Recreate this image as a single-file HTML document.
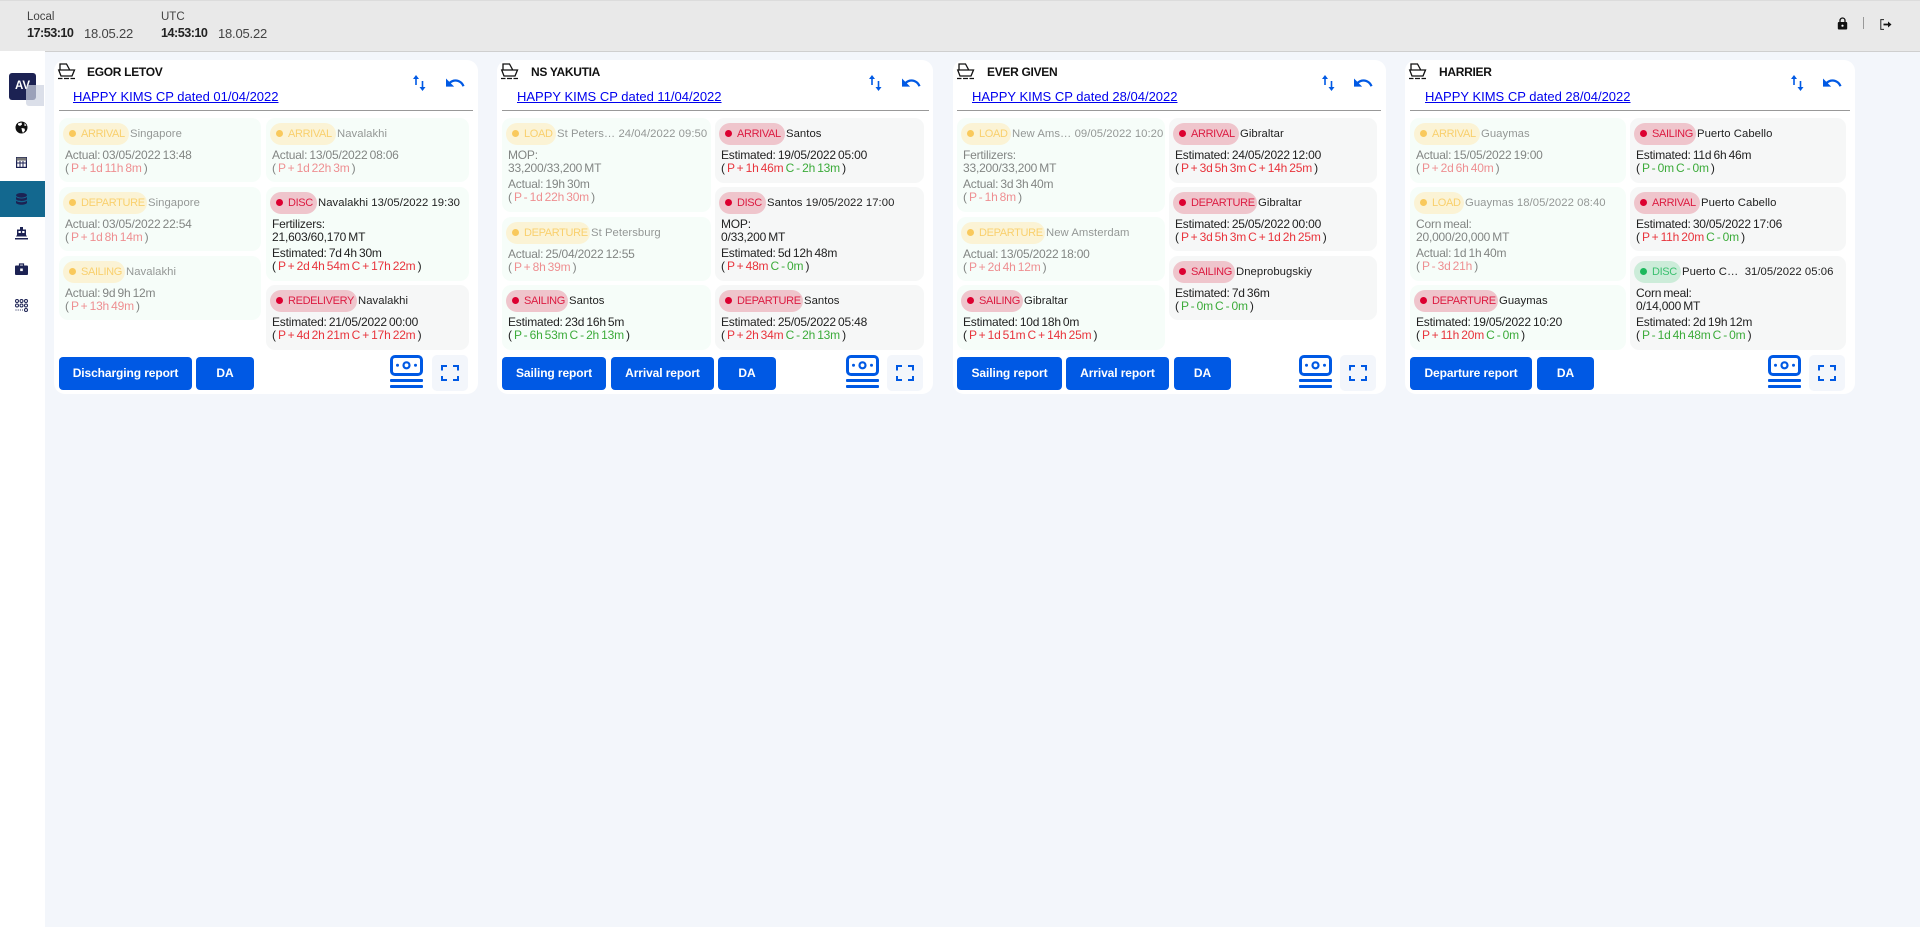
<!DOCTYPE html>
<html lang="en"><head><meta charset="utf-8"><title>Fleet</title>
<style>
html,body{margin:0;padding:0}
body{width:1920px;height:927px;overflow:hidden;background:#f3f6fb;position:relative;font:11.8px/13px "Liberation Sans",sans-serif;color:#222}
.a{position:absolute}
#top{left:0;top:0;width:1920px;height:50px;background:#e9e9e9;border-top:1px solid #dcdcdc;border-bottom:1px solid #cfcfcf}
.tl{font-size:11.5px;color:#444}
.tm{font-size:12.6px;font-weight:bold;letter-spacing:-.5px;color:#222}
.dt{font-size:13px;letter-spacing:-.2px;color:#444}
#side{left:0;top:51px;width:45px;height:876px;background:#fff}
.c{background:#fff;border-radius:11px;top:60px;height:334px}
.t{top:65px;font-size:12px;line-height:14px;font-weight:bold;letter-spacing:-.3px;color:#111;white-space:nowrap}
.l{top:89px;font-size:13px;line-height:16px;color:#00e;text-decoration:underline;white-space:nowrap}
.hr{top:110px;height:1px;background:#999}
.i{border-radius:9px;white-space:nowrap;overflow:hidden;box-sizing:border-box;padding:5px 0 0 4px}
.g{background:#f6fdf9}.k{background:#f6f7f7}
.h{height:22px;line-height:22px;display:flex;font-size:11.3px;letter-spacing:.05px}
.p{display:block;height:22px;border-radius:11px;position:relative;padding-left:18px;box-sizing:border-box;margin-right:1px;font-size:11px;font-weight:normal;letter-spacing:-.35px;flex:none}
.p:before{content:"";position:absolute;left:6px;top:7px;width:7px;height:7px;border-radius:50%}
.y{background:#fbf3d5;color:#f9d06e}.y:before{background:#f9c95c}
.e{background:#efc5cc;color:#dc1c42}.e:before{background:#dc0030}
.n{background:#ccecd9;color:#3cc070}.n:before{background:#1db85c}
.w1{width:66px}.w2{width:84px}.w3{width:62px}.w4{width:47px}.w5{width:87px}.w6{width:50px}
.d{margin:4px 0 0 2px;font-size:12px;line-height:13px;letter-spacing:-.2px;word-spacing:-1px}
.d p{margin:0 0 3px}
.f .h span,.f .d{opacity:.55}
.f .h{color:#444}
.f .p{color:#f9d06e}
em{font-style:normal}
.r{color:#e8343c}.v{color:#3cab3a}
.b{top:357px;height:33px;line-height:32px;background:#0059e4;border-radius:4px;color:#fff;font-size:12px;font-weight:bold;letter-spacing:-.1px;text-align:center;white-space:nowrap}
.x{top:355px;width:36px;height:36px;background:#f3f6fb;border-radius:5px}
svg{position:absolute;overflow:visible}
</style></head>
<body>
<svg width="0" height="0" style="position:absolute"><defs>
<g id="ship"><path d="M2 6.500V1h6.500l3 5.500M.7 7H16.500L14 13H3zM0 15.500h4.500M6 15.500h5M12.500 15.500H17" fill="none" stroke="#111" stroke-width="1.300"/></g>
<g id="swap"><path d="M0 4 3 0l3 4H3.800v6H2.200V4zM6.500 12l3 4 3-4h-2.200V6H8.700v6z" fill="#0059e4"/></g>
<g id="undo"><path d="M12.500 8c-2.650 0-5.050.99-6.900 2.600L2 7v9h9l-3.620-3.620c1.390-1.160 3.160-1.880 5.120-1.880 3.540 0 6.550 2.310 7.600 5.500l2.370-.78C21.080 11.030 17.150 8 12.500 8z" fill="#0059e4"/></g>
<g id="money"><rect x="1.500" y="1.500" width="30" height="18" rx="3.500" fill="none" stroke="#0059e4" stroke-width="3"/><circle cx="16.500" cy="10.300" r="3" fill="none" stroke="#0059e4" stroke-width="2.200"/><circle cx="7.500" cy="10.300" r="1.500" fill="#0059e4"/><circle cx="25.500" cy="10.300" r="1.500" fill="#0059e4"/><rect x="0" y="24" width="33" height="3" rx="1" fill="#0059e4"/><rect x="0" y="30" width="33" height="3" rx="1" fill="#0059e4"/></g>
<g id="exp"><path d="M1 5.500V1h5M12 1h5v4.500M17 11v4h-5M6 15H1v-4" fill="none" stroke="#0059e4" stroke-width="2"/></g>
</defs></svg>

<div class="a" id="top"></div>
<div class="a tl" style="left:27px;top:11px">Local</div>
<div class="a tm" style="left:27px;top:27px">17:53:10</div>
<div class="a dt" style="left:84px;top:27px">18.05.22</div>
<div class="a tl" style="left:161px;top:11px">UTC</div>
<div class="a tm" style="left:161px;top:27px">14:53:10</div>
<div class="a dt" style="left:218px;top:27px">18.05.22</div>
<svg style="left:1837px;top:17px" width="11" height="13" viewBox="0 0 11 13"><path d="M3 5V3.500a2.500 2.500 0 0 1 5 0V5" fill="none" stroke="#111" stroke-width="1.300"/><rect x=".8" y="5" width="9.400" height="7.500" rx="1" fill="#111"/><circle cx="5.500" cy="8.700" r="1.100" fill="#fff"/></svg>
<div class="a" style="left:1863px;top:17px;width:1px;height:12px;background:#999"></div>
<svg style="left:1880px;top:19px" width="12" height="11" viewBox="0 0 12 11"><path d="M4 .6H.8v9.800H4" fill="none" stroke="#222" stroke-width="1"/><path d="M3.500 4.600h4.500V2.500l3.500 3-3.500 3V6.400H3.500z" fill="#111"/></svg>

<div class="a" id="side"></div>
<div class="a" style="left:9px;top:73px;width:27px;height:27px;background:#1c2253;border-radius:3px;color:#fff;font-size:11.500px;font-weight:bold;line-height:26px;text-align:center">AV</div>
<div class="a" style="left:26px;top:85px;width:18px;height:21px;background:rgba(205,210,225,.72);border-radius:3px 0 0 3px"></div>
<svg style="left:15px;top:121px" width="13" height="13" viewBox="0 0 13 13"><circle cx="6.500" cy="6.500" r="6" fill="#111"/><path d="M3 2.500 6.500 1.500 7 3.500 5 5 3 4zM6.500 7l3 .5.500 2-2 2.500-1-2zM9.500 2 11.500 4.500 9.500 5z" fill="#fff"/></svg>
<svg style="left:16px;top:157px" width="11" height="11" viewBox="0 0 11 11"><rect x=".6" y=".6" width="9.800" height="9.800" fill="none" stroke="#1c2253" stroke-width="1.200"/><rect x=".6" y=".6" width="9.800" height="3" fill="#777"/><path d="M.6 6h9.800M4 4v6.500M7 4v6.500" stroke="#1c2253" stroke-width="1"/></svg>
<div class="a" style="left:0;top:181px;width:45px;height:36px;background:#13688f"></div>
<svg style="left:16px;top:193px" width="11" height="12" viewBox="0 0 11 12"><g fill="#1c2253"><ellipse cx="5.500" cy="2.300" rx="5.500" ry="2.300"/><path d="M0 4c1.200 1 3 1.500 5.500 1.500S9.800 5 11 4v2.300c-.8 1-3 1.700-5.500 1.700S.8 7.300 0 6.300z"/><path d="M0 7.800c1.200 1 3 1.500 5.500 1.500s4.300-.5 5.500-1.500V10c-.8 1-3 1.800-5.500 1.800S.8 11 0 10z"/></g></svg>
<svg style="left:15px;top:227px" width="13" height="13" viewBox="0 0 13 13"><g fill="#1c2253"><rect x="5" y="0" width="3" height="3"/><path d="M2 2.500h9V8l1 1.500H1L2 8z"/><rect x="0" y="11" width="13" height="1.500"/></g><rect x="3.500" y="4" width="2.300" height="2" fill="#fff"/><rect x="7.200" y="4" width="2.300" height="2" fill="#fff"/></svg>
<svg style="left:15px;top:263px" width="13" height="12" viewBox="0 0 13 12"><path d="M4.500 3V1h4v2" fill="none" stroke="#1c2253" stroke-width="1.200"/><rect x="0" y="2.500" width="13" height="9.500" rx="1" fill="#1c2253"/><rect x="5.200" y="5.500" width="2.600" height="2.600" fill="#fff"/></svg>
<svg style="left:15px;top:299px" width="13" height="13" viewBox="0 0 13 13"><g fill="none" stroke="#1c2253" stroke-width="1"><circle cx="2" cy="2" r="1.500"/><circle cx="6.500" cy="2" r="1.500"/><circle cx="11" cy="2" r="1.500"/><circle cx="2" cy="6.500" r="1.500"/><circle cx="6.500" cy="6.500" r="1.500"/><circle cx="11" cy="6.500" r="1.500"/><circle cx="11" cy="11" r="1.500"/><path d="M.5 11h7.500" stroke-dasharray="1 1.200"/></g></svg>

<!-- CARD 1 -->
<div class="a c" style="left:54px;width:424px"></div>
<svg style="left:58px;top:63px" width="17" height="16"><use href="#ship"/></svg>
<div class="a t" style="left:87px">EGOR LETOV</div>
<div class="a l" style="left:73px">HAPPY KIMS CP dated 01/04/2022</div>
<svg style="left:413px;top:75px" width="13" height="16"><use href="#swap"/></svg>
<svg style="left:446px;top:78px" width="19" height="10" viewBox="2 7 21 10"><use href="#undo"/></svg>
<div class="a hr" style="left:59px;width:414px"></div>

<div class="a i g f" style="left:59px;top:118px;width:202px;height:64px"><div class="h"><b class="p y w1">ARRIVAL</b><span>Singapore</span></div><div class="d">Actual: 03/05/2022 13:48<br>( <em class="r">P + 1d 11h 8m</em> )</div></div>
<div class="a i g f" style="left:59px;top:187px;width:202px;height:64px"><div class="h"><b class="p y w2">DEPARTURE</b><span>Singapore</span></div><div class="d">Actual: 03/05/2022 22:54<br>( <em class="r">P + 1d 8h 14m</em> )</div></div>
<div class="a i g f" style="left:59px;top:256px;width:202px;height:64px"><div class="h"><b class="p y w3">SAILING</b><span>Navalakhi</span></div><div class="d">Actual: 9d 9h 12m<br>( <em class="r">P + 13h 49m</em> )</div></div>
<div class="a i g f" style="left:266px;top:118px;width:203px;height:64px"><div class="h"><b class="p y w1">ARRIVAL</b><span>Navalakhi</span></div><div class="d">Actual: 13/05/2022 08:06<br>( <em class="r">P + 1d 22h 3m</em> )</div></div>
<div class="a i g" style="left:266px;top:187px;width:203px;height:94px"><div class="h"><b class="p e w4">DISC</b><span>Navalakhi 13/05/2022 19:30</span></div><div class="d"><p>Fertilizers:<br>21,603/60,170 MT</p>Estimated: 7d 4h 30m<br>( <em class="r">P + 2d 4h 54m C + 17h 22m</em> )</div></div>
<div class="a i k" style="left:266px;top:285px;width:203px;height:65px"><div class="h"><b class="p e w5">REDELIVERY</b><span>Navalakhi</span></div><div class="d">Estimated: 21/05/2022 00:00<br>( <em class="r">P + 4d 2h 21m C + 17h 22m</em> )</div></div>

<div class="a b" style="left:59px;width:133px">Discharging report</div>
<div class="a b" style="left:196px;width:58px">DA</div>
<svg style="left:390px;top:355px" width="33" height="33"><use href="#money"/></svg>
<div class="a x" style="left:432px"><svg style="left:9px;top:10px" width="18" height="16"><use href="#exp"/></svg></div>

<!-- CARD 2 -->
<div class="a c" style="left:497px;width:436px"></div>
<svg style="left:501px;top:63px" width="17" height="16"><use href="#ship"/></svg>
<div class="a t" style="left:531px">NS YAKUTIA</div>
<div class="a l" style="left:517px">HAPPY KIMS CP dated 11/04/2022</div>
<svg style="left:869px;top:75px" width="13" height="16"><use href="#swap"/></svg>
<svg style="left:902px;top:78px" width="19" height="10" viewBox="2 7 21 10"><use href="#undo"/></svg>
<div class="a hr" style="left:502px;width:427px"></div>

<div class="a i g f" style="left:502px;top:118px;width:209px;height:94px"><div class="h"><b class="p y w6">LOAD</b><span>St Peters… 24/04/2022 09:50</span></div><div class="d"><p>MOP:<br>33,200/33,200 MT</p>Actual: 19h 30m<br>( <em class="r">P - 1d 22h 30m</em> )</div></div>
<div class="a i g f" style="left:502px;top:217px;width:209px;height:64px"><div class="h"><b class="p y w2">DEPARTURE</b><span>St Petersburg</span></div><div class="d">Actual: 25/04/2022 12:55<br>( <em class="r">P + 8h 39m</em> )</div></div>
<div class="a i g" style="left:502px;top:285px;width:209px;height:65px"><div class="h"><b class="p e w3">SAILING</b><span>Santos</span></div><div class="d">Estimated: 23d 16h 5m<br>( <em class="v">P - 6h 53m C - 2h 13m</em> )</div></div>
<div class="a i k" style="left:715px;top:118px;width:209px;height:65px"><div class="h"><b class="p e w1">ARRIVAL</b><span>Santos</span></div><div class="d">Estimated: 19/05/2022 05:00<br>( <em class="r">P + 1h 46m</em> <em class="v">C - 2h 13m</em> )</div></div>
<div class="a i k" style="left:715px;top:187px;width:209px;height:94px"><div class="h"><b class="p e w4">DISC</b><span>Santos 19/05/2022 17:00</span></div><div class="d"><p>MOP:<br>0/33,200 MT</p>Estimated: 5d 12h 48m<br>( <em class="r">P + 48m</em> <em class="v">C - 0m</em> )</div></div>
<div class="a i k" style="left:715px;top:285px;width:209px;height:65px"><div class="h"><b class="p e w2">DEPARTURE</b><span>Santos</span></div><div class="d">Estimated: 25/05/2022 05:48<br>( <em class="r">P + 2h 34m</em> <em class="v">C - 2h 13m</em> )</div></div>

<div class="a b" style="left:502px;width:104px">Sailing report</div>
<div class="a b" style="left:611px;width:103px">Arrival report</div>
<div class="a b" style="left:718px;width:58px">DA</div>
<svg style="left:846px;top:355px" width="33" height="33"><use href="#money"/></svg>
<div class="a x" style="left:887px"><svg style="left:9px;top:10px" width="18" height="16"><use href="#exp"/></svg></div>

<!-- CARD 3 -->
<div class="a c" style="left:953px;width:433px"></div>
<svg style="left:957px;top:63px" width="17" height="16"><use href="#ship"/></svg>
<div class="a t" style="left:987px">EVER GIVEN</div>
<div class="a l" style="left:972px">HAPPY KIMS CP dated 28/04/2022</div>
<svg style="left:1322px;top:75px" width="13" height="16"><use href="#swap"/></svg>
<svg style="left:1354px;top:78px" width="19" height="10" viewBox="2 7 21 10"><use href="#undo"/></svg>
<div class="a hr" style="left:957px;width:424px"></div>

<div class="a i g f" style="left:957px;top:118px;width:208px;height:94px"><div class="h"><b class="p y w6">LOAD</b><span>New Ams… 09/05/2022 10:20</span></div><div class="d"><p>Fertilizers:<br>33,200/33,200 MT</p>Actual: 3d 3h 40m<br>( <em class="r">P - 1h 8m</em> )</div></div>
<div class="a i g f" style="left:957px;top:217px;width:208px;height:64px"><div class="h"><b class="p y w2">DEPARTURE</b><span>New Amsterdam</span></div><div class="d">Actual: 13/05/2022 18:00<br>( <em class="r">P + 2d 4h 12m</em> )</div></div>
<div class="a i g" style="left:957px;top:285px;width:208px;height:65px"><div class="h"><b class="p e w3">SAILING</b><span>Gibraltar</span></div><div class="d">Estimated: 10d 18h 0m<br>( <em class="r">P + 1d 51m C + 14h 25m</em> )</div></div>
<div class="a i k" style="left:1169px;top:118px;width:208px;height:65px"><div class="h"><b class="p e w1">ARRIVAL</b><span>Gibraltar</span></div><div class="d">Estimated: 24/05/2022 12:00<br>( <em class="r">P + 3d 5h 3m C + 14h 25m</em> )</div></div>
<div class="a i k" style="left:1169px;top:187px;width:208px;height:64px"><div class="h"><b class="p e w2">DEPARTURE</b><span>Gibraltar</span></div><div class="d">Estimated: 25/05/2022 00:00<br>( <em class="r">P + 3d 5h 3m C + 1d 2h 25m</em> )</div></div>
<div class="a i k" style="left:1169px;top:256px;width:208px;height:64px"><div class="h"><b class="p e w3">SAILING</b><span>Dneprobugskiy</span></div><div class="d">Estimated: 7d 36m<br>( <em class="v">P - 0m C - 0m</em> )</div></div>

<div class="a b" style="left:957px;width:105px">Sailing report</div>
<div class="a b" style="left:1066px;width:103px">Arrival report</div>
<div class="a b" style="left:1174px;width:57px">DA</div>
<svg style="left:1299px;top:355px" width="33" height="33"><use href="#money"/></svg>
<div class="a x" style="left:1340px"><svg style="left:9px;top:10px" width="18" height="16"><use href="#exp"/></svg></div>

<!-- CARD 4 -->
<div class="a c" style="left:1405px;width:450px"></div>
<svg style="left:1409px;top:63px" width="17" height="16"><use href="#ship"/></svg>
<div class="a t" style="left:1439px">HARRIER</div>
<div class="a l" style="left:1425px">HAPPY KIMS CP dated 28/04/2022</div>
<svg style="left:1791px;top:75px" width="13" height="16"><use href="#swap"/></svg>
<svg style="left:1823px;top:78px" width="19" height="10" viewBox="2 7 21 10"><use href="#undo"/></svg>
<div class="a hr" style="left:1410px;width:440px"></div>

<div class="a i g f" style="left:1410px;top:118px;width:216px;height:65px"><div class="h"><b class="p y w1">ARRIVAL</b><span>Guaymas</span></div><div class="d">Actual: 15/05/2022 19:00<br>( <em class="r">P + 2d 6h 40m</em> )</div></div>
<div class="a i g f" style="left:1410px;top:187px;width:216px;height:94px"><div class="h"><b class="p y w6">LOAD</b><span>Guaymas 18/05/2022 08:40</span></div><div class="d"><p>Corn meal:<br>20,000/20,000 MT</p>Actual: 1d 1h 40m<br>( <em class="r">P - 3d 21h</em> )</div></div>
<div class="a i g" style="left:1410px;top:285px;width:216px;height:65px"><div class="h"><b class="p e w2">DEPARTURE</b><span>Guaymas</span></div><div class="d">Estimated: 19/05/2022 10:20<br>( <em class="r">P + 11h 20m</em> <em class="v">C - 0m</em> )</div></div>
<div class="a i k" style="left:1630px;top:118px;width:216px;height:65px"><div class="h"><b class="p e w3">SAILING</b><span>Puerto Cabello</span></div><div class="d">Estimated: 11d 6h 46m<br>( <em class="v">P - 0m C - 0m</em> )</div></div>
<div class="a i k" style="left:1630px;top:187px;width:216px;height:64px"><div class="h"><b class="p e w1">ARRIVAL</b><span>Puerto Cabello</span></div><div class="d">Estimated: 30/05/2022 17:06<br>( <em class="r">P + 11h 20m</em> <em class="v">C - 0m</em> )</div></div>
<div class="a i k" style="left:1630px;top:256px;width:216px;height:94px"><div class="h"><b class="p n w4">DISC</b><span>Puerto C…&nbsp; 31/05/2022 05:06</span></div><div class="d"><p>Corn meal:<br>0/14,000 MT</p>Estimated: 2d 19h 12m<br>( <em class="v">P - 1d 4h 48m C - 0m</em> )</div></div>

<div class="a b" style="left:1410px;width:122px">Departure report</div>
<div class="a b" style="left:1537px;width:57px">DA</div>
<svg style="left:1768px;top:355px" width="33" height="33"><use href="#money"/></svg>
<div class="a x" style="left:1809px"><svg style="left:9px;top:10px" width="18" height="16"><use href="#exp"/></svg></div>
</body></html>
